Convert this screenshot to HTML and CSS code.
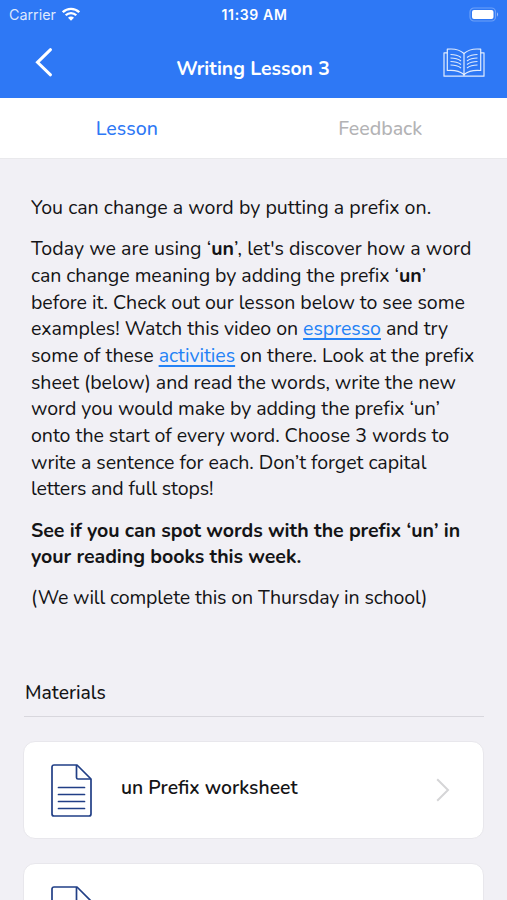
FILE: index.html
```html
<!DOCTYPE html>
<html lang="en">
<head>
  <meta charset="UTF-8">
  <meta name="viewport" content="width=device-width, initial-scale=1.0">
  <title>Writing Lesson 3</title>
  <link rel="stylesheet" href="styles.css">
</head>
<body>
  <header class="header">
    <div class="status-bar">
      <div class="carrier">
        <span>Carrier</span>
        <svg width="18" height="14" viewBox="0 0 18 14" fill="none" stroke="#fff" stroke-width="2.3">
          <path d="M0.8 5.2a11.6 11.6 0 0 1 16.4 0"/>
          <path d="M3.7 8.3a7.5 7.5 0 0 1 10.6 0"/>
          <path d="M9 13.7 6 10.7a4.2 4.2 0 0 1 6 0z" fill="#fff" stroke="none"/>
        </svg>
      </div>
      <span class="time">11:39 AM</span>
      <svg class="battery" width="31" height="15" viewBox="0 0 31 15">
        <rect x="1" y="1" width="25.5" height="13" rx="4" fill="none" stroke="#fff" stroke-opacity="0.3" stroke-width="1.2"/>
        <rect x="3" y="3" width="21.5" height="9" rx="2" fill="#fff"/>
        <path d="M28 5.3q2.2 2.2 0 4.4z" fill="#fff" fill-opacity="0.5"/>
      </svg>
    </div>
    <div class="title-bar">
      <a class="back" href="#" aria-label="Back">
        <svg width="18" height="30" viewBox="0 0 18 30" fill="none" stroke="#fff" stroke-width="3" stroke-linecap="round">
          <path d="M15.5 2.7 2.5 15.3l13 12.5"/>
        </svg>
      </a>
      <h1>Writing Lesson 3</h1>
      <a class="book" href="#" aria-label="Reading book">
        <svg width="42" height="30" viewBox="0 0 42 30" fill="none" stroke="#fff" stroke-opacity="0.85" stroke-width="1.2" stroke-linejoin="round">
          <path d="M4.3 1.2Q15 0 21 5.5Q27 0 37.7 1.2V22.5Q27 21.5 21 26.5Q15 21.5 4.3 22.5Z"/>
          <path d="M4.3 4.8H1v23.4h40V4.8h-3.3"/>
          <path d="M21 5.5V28"/>
          <path d="M7.5 6.5q6.5 0 10.5 3M7.5 10q6.5 0 10.5 3M7.5 13.5q6.5 0 10.5 3M7.5 17q6.5 0 10.5 3M34.5 6.5q-6.5 0-10.5 3M34.5 10q-6.5 0-10.5 3M34.5 13.5q-6.5 0-10.5 3M34.5 17q-6.5 0-10.5 3"/>
        </svg>
      </a>
    </div>
  </header>

  <nav class="tabs">
    <a class="tab active" href="#lesson">Lesson</a>
    <a class="tab" href="#feedback">Feedback</a>
  </nav>

  <main>
    <section class="lesson" id="lesson">
      <p class="loose">You can change a word by putting a prefix on.</p>
      <p>
        <span class="loose">Today we are using ‘<b>un</b>’, let's discover how a word</span><br>
        can change meaning by adding the prefix ‘<b>un</b>’<br>
        before it. Check out our lesson below to see some<br>
        examples! Watch this video on <a href="#">espresso</a> and try<br>
        some of these <a href="#">activities</a> on there. Look at the prefix<br>
        sheet (below) and read the words, write the new<br>
        word you would make by adding the prefix ‘un’<br>
        onto the start of every word. Choose 3 words to<br>
        write a sentence for each. Don’t forget capital<br>
        <span class="tight">letters and full stops!</span>
      </p>
      <p class="challenge">
        See if you can spot words with the prefix ‘un’ in<br>
        your reading books this week.
      </p>
      <p class="tight">(We will complete this on Thursday in school)</p>
    </section>

    <section class="materials">
      <h2>Materials</h2>
      <a class="card" href="#">
        <svg class="doc" width="41" height="53" viewBox="0 0 41 53" fill="none" stroke="#213f86" stroke-width="1.7" stroke-linejoin="round">
          <path d="M3 1h23L40 15v35a2 2 0 0 1-2 2H3a2 2 0 0 1-2-2V3a2 2 0 0 1 2-2z"/>
          <path d="M25.5 1v12.5a1.5 1.5 0 0 0 1.5 1.5h13"/>
          <path d="M7.5 23.5h26M7.5 30.5h26M7.5 37.5h26M7.5 44.5h26" stroke-linecap="round"/>
        </svg>
        <span class="card-title">un Prefix worksheet</span>
        <svg class="arrow" width="14" height="24" viewBox="0 0 14 24" fill="none" stroke="#d5d5d7" stroke-width="2">
          <path d="M1.2 1.2 12 12 1.2 22.8"/>
        </svg>
      </a>
      <a class="card" href="#" aria-label="Material">
        <svg class="doc" width="41" height="53" viewBox="0 0 41 53" fill="none" stroke="#213f86" stroke-width="1.7" stroke-linejoin="round">
          <path d="M3 1h23L40 15v35a2 2 0 0 1-2 2H3a2 2 0 0 1-2-2V3a2 2 0 0 1 2-2z"/>
          <path d="M25.5 1v12.5a1.5 1.5 0 0 0 1.5 1.5h13"/>
        </svg>
      </a>
    </section>
  </main>
</body>
</html>
```
FILE: styles.css
```css
:root {
  --primary: #2e78f5;
  --page-bg: #f1f0f5;
}

* {
  box-sizing: border-box;
}

body {
  display: flex;
  flex-direction: column;
  height: 100vh;
  margin: 0;
  font-family: Nunito, Lato, sans-serif;
  color: #141416;
  background: var(--page-bg);
}

main {
  flex: 1;
  min-height: 0;
  overflow: hidden;
}

a {
  color: inherit;
  text-decoration: none;
}

svg {
  display: block;
}

/* Header */
.header {
  height: 98px;
  background: var(--primary);
  color: #fff;
}

.status-bar {
  display: grid;
  grid-template-columns: 1fr auto 1fr;
  align-items: center;
  height: 28px;
  padding: 0 7px 0 9px;
  font-family: Inter, sans-serif;
  font-size: 14.3px;
}

.carrier {
  display: flex;
  align-items: center;
  gap: 6px;
  color: rgba(255, 255, 255, 0.85);
}

.time {
  font-weight: 600;
  font-size: 14px;
  letter-spacing: 0.65px;
}

.battery {
  justify-self: end;
}

.title-bar {
  display: grid;
  grid-template-columns: 1fr auto 1fr;
  height: 70px;
  padding: 0 22px 0 21px;
}

.title-bar h1 {
  margin: 27px 0 0;
  font-size: 19.4px;
  line-height: 28px;
  font-weight: 700;
}

.back {
  padding: 19px 0 0 14px;
}

.book {
  justify-self: end;
  padding-top: 20px;
}

/* Tabs */
.tabs {
  display: grid;
  grid-template-columns: 1fr 1fr;
  height: 61px;
  background: #fff;
  border-bottom: 1px solid #e9e9ec;
}

.tab {
  padding-top: 17px;
  line-height: 28px;
  text-align: center;
  font-size: 19.6px;
  font-weight: 500;
  color: #b3b3b5;
}

.tab.active {
  color: var(--primary);
}

/* Lesson text */
.lesson {
  padding: 36px 20px 0 31px;
  font-size: 19.57px;
  line-height: 26.7px;
  letter-spacing: -0.04px;
  white-space: nowrap;
}

.lesson p {
  margin: 0 0 14.4px;
}

.lesson .loose {
  letter-spacing: 0.04px;
}

.lesson .tight {
  letter-spacing: -0.14px;
}

.lesson a {
  color: #2382f6;
  text-decoration: underline;
  text-decoration-thickness: 1.5px;
  text-underline-offset: 3px;
}

.lesson .challenge {
  font-weight: 700;
}

/* Materials */
.materials {
  padding: 52.6px 23px 0;
}

.materials h2 {
  margin: 0 0 24px 1px;
  padding: 0 1px 9px;
  border-bottom: 1px solid #d8d7dd;
  font-size: 19.3px;
  line-height: 28px;
  font-weight: 500;
}

.card {
  display: flex;
  align-items: center;
  height: 98px;
  margin-bottom: 24px;
  padding: 0 33px 0 27px;
  background: #fff;
  border: 1px solid #e8e7ec;
  border-radius: 12px;
}

.card-title {
  flex: 1;
  margin: -5px 0 0 29px;
  font-size: 19.4px;
  font-weight: 600;
}
```
